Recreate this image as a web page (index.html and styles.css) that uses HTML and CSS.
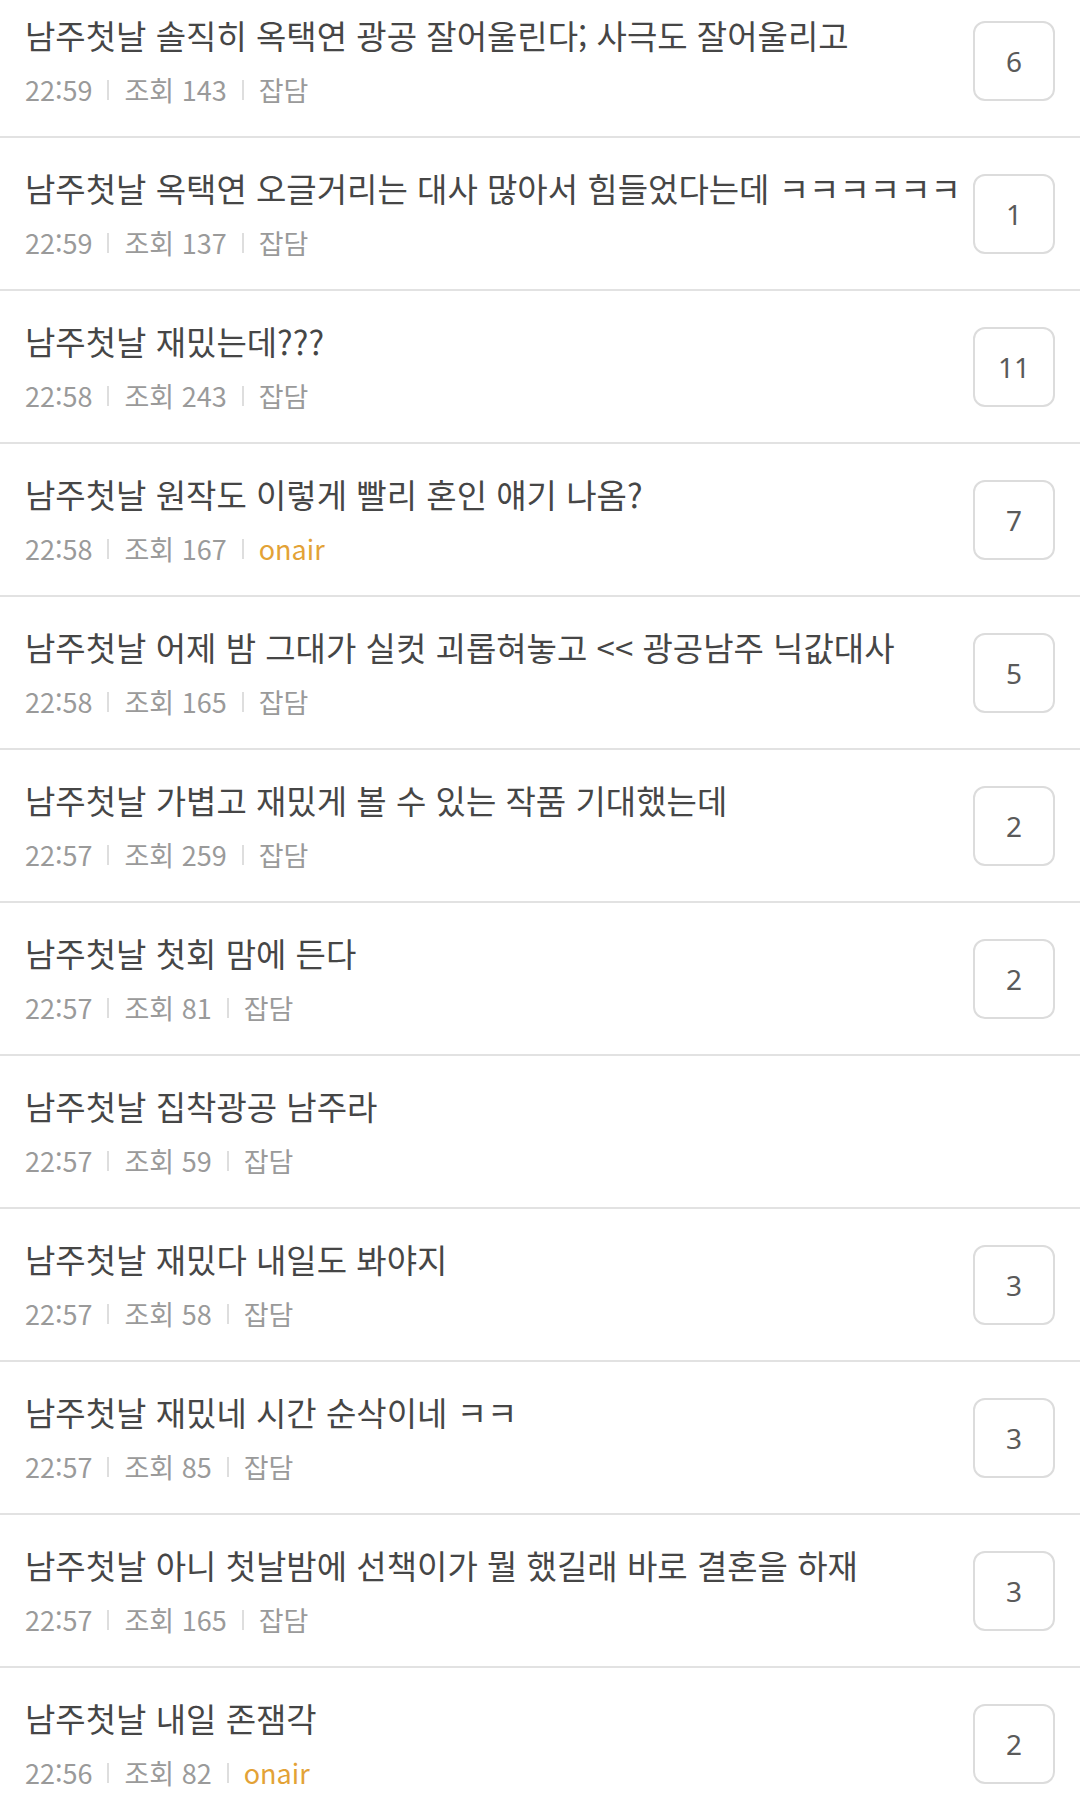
FILE: index.html
```html
<!DOCTYPE html>
<html lang="ko">
<head>
<meta charset="utf-8">
<link rel="stylesheet" href="styles.css">
</head>
<body>
<ul class="list">
  <li class="row"><div class="main"><div class="title">남주첫날 솔직히 옥택연 광공 잘어울린다; 사극도 잘어울리고</div><div class="meta"><span>22:59</span><i class="bar"></i><span>조회 143</span><i class="bar"></i><span>잡담</span></div></div><div class="badge">6</div></li>
  <li class="row"><div class="main"><div class="title">남주첫날 옥택연 오글거리는 대사 많아서 힘들었다는데 ㅋㅋㅋㅋㅋㅋ</div><div class="meta"><span>22:59</span><i class="bar"></i><span>조회 137</span><i class="bar"></i><span>잡담</span></div></div><div class="badge">1</div></li>
  <li class="row"><div class="main"><div class="title">남주첫날 재밌는데???</div><div class="meta"><span>22:58</span><i class="bar"></i><span>조회 243</span><i class="bar"></i><span>잡담</span></div></div><div class="badge">11</div></li>
  <li class="row"><div class="main"><div class="title">남주첫날 원작도 이렇게 빨리 혼인 얘기 나옴?</div><div class="meta"><span>22:58</span><i class="bar"></i><span>조회 167</span><i class="bar"></i><span class="onair">onair</span></div></div><div class="badge">7</div></li>
  <li class="row"><div class="main"><div class="title">남주첫날 어제 밤 그대가 실컷 괴롭혀놓고 &lt;&lt; 광공남주 닉값대사</div><div class="meta"><span>22:58</span><i class="bar"></i><span>조회 165</span><i class="bar"></i><span>잡담</span></div></div><div class="badge">5</div></li>
  <li class="row"><div class="main"><div class="title">남주첫날 가볍고 재밌게 볼 수 있는 작품 기대했는데</div><div class="meta"><span>22:57</span><i class="bar"></i><span>조회 259</span><i class="bar"></i><span>잡담</span></div></div><div class="badge">2</div></li>
  <li class="row"><div class="main"><div class="title">남주첫날 첫회 맘에 든다</div><div class="meta"><span>22:57</span><i class="bar"></i><span>조회 81</span><i class="bar"></i><span>잡담</span></div></div><div class="badge">2</div></li>
  <li class="row"><div class="main"><div class="title">남주첫날 집착광공 남주라</div><div class="meta"><span>22:57</span><i class="bar"></i><span>조회 59</span><i class="bar"></i><span>잡담</span></div></div></li>
  <li class="row"><div class="main"><div class="title">남주첫날 재밌다 내일도 봐야지</div><div class="meta"><span>22:57</span><i class="bar"></i><span>조회 58</span><i class="bar"></i><span>잡담</span></div></div><div class="badge">3</div></li>
  <li class="row"><div class="main"><div class="title">남주첫날 재밌네 시간 순삭이네 ㅋㅋ</div><div class="meta"><span>22:57</span><i class="bar"></i><span>조회 85</span><i class="bar"></i><span>잡담</span></div></div><div class="badge">3</div></li>
  <li class="row"><div class="main"><div class="title">남주첫날 아니 첫날밤에 선책이가 뭘 했길래 바로 결혼을 하재</div><div class="meta"><span>22:57</span><i class="bar"></i><span>조회 165</span><i class="bar"></i><span>잡담</span></div></div><div class="badge">3</div></li>
  <li class="row"><div class="main"><div class="title">남주첫날 내일 존잼각</div><div class="meta"><span>22:56</span><i class="bar"></i><span>조회 82</span><i class="bar"></i><span class="onair">onair</span></div></div><div class="badge">2</div></li>
</ul>
</body>
</html>
```

FILE: styles.css
```css
html, body {
  margin: 0;
  padding: 0;
  background: #ffffff;
}
body {
  width: 1080px;
  height: 1806px;
  overflow: hidden;
  font-family: "Noto Sans CJK KR", "Noto Sans", sans-serif;
}
.list {
  list-style: none;
  margin: -15px 0 0 0;
  padding: 0;
}
.row {
  display: flex;
  align-items: center;
  height: 151px;
  border-bottom: 2px solid #e2e2e2;
  padding: 0 25px 0 25px;
}
.main {
  flex: 1;
  display: flex;
  flex-direction: column;
  gap: 15px;
  min-width: 0;
}
.title {
  font-size: 33px;
  line-height: 44px;
  color: #464646;
  white-space: nowrap;
}
.meta {
  display: flex;
  align-items: center;
  font-size: 27px;
  line-height: 36px;
  color: #9a9a9a;
}
.bar {
  display: inline-block;
  width: 2px;
  height: 20px;
  background: #dedede;
  margin: 0 15px;
}
.onair {
  color: #e3a236;
}
.badge {
  flex: none;
  width: 78px;
  height: 76px;
  border: 2px solid #dcdcdc;
  border-radius: 12px;
  display: flex;
  align-items: center;
  justify-content: center;
  font-family: "Noto Sans", sans-serif;
  font-size: 28px;
  font-weight: 400;
  color: #5a5a5a;
  margin-left: 20px;
}
```
